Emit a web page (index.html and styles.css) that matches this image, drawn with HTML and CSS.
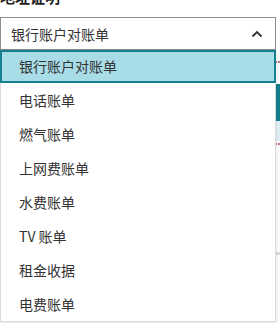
FILE: index.html
```html
<!DOCTYPE html>
<html lang="zh-CN">
<head>
  <meta charset="UTF-8">
  <title>地址证明</title>
  <link rel="stylesheet" href="styles.css">
</head>
<body>
  <div class="field">
    <label class="field-label">地址证明</label>

    <div class="select-wrap">
      <div class="select-box">
        <span class="select-value">银行账户对账单</span>
        <svg class="chevron" width="12" height="8" viewBox="0 0 12 8">
          <path d="M1.5 6.5 L6 2 L10.5 6.5" fill="none" stroke="#333" stroke-width="1.8"/>
        </svg>
      </div>

      <ul class="dropdown">
        <li class="option selected">银行账户对账单</li>
        <li class="option">电话账单</li>
        <li class="option">燃气账单</li>
        <li class="option">上网费账单</li>
        <li class="option">水费账单</li>
        <li class="option">TV 账单</li>
        <li class="option">租金收据</li>
        <li class="option">电费账单</li>
      </ul>
    </div>
  </div>

  <div class="under">
    <div class="hint-line"></div>
    <div class="upload-btn"></div>
    <div class="upload-note"></div>
    <div class="hint-line second"></div>
    <div class="divider"></div>
    <p class="section-title">请确认您的地址信息</p>
  </div>
</body>
</html>
```

FILE: styles.css
```css
body {
  margin: 0;
  font-family: "Noto Sans CJK SC", "Noto Sans", sans-serif;
  color: #333;
  background: #fff;
  overflow: hidden;
}

.field {
  margin-top: -13px;
}

.field-label {
  display: block;
  font-size: 15px;
  font-weight: bold;
  line-height: 20px;
  color: #222;
  margin-bottom: 10px;
}

.select-wrap {
  position: relative;
  width: 276px;
}

.select-box {
  box-sizing: border-box;
  height: 33px;
  border: 1px solid #8c8c8c;
  display: flex;
  align-items: center;
  justify-content: space-between;
  padding: 0 12px 0 10px;
  background: #fff;
}

.select-value {
  font-size: 14px;
  color: #333;
}

.chevron {
  display: block;
}

.dropdown {
  position: absolute;
  top: 33px;
  left: 0;
  z-index: 10;
  box-sizing: border-box;
  width: 276px;
  height: 272px;
  margin: 0;
  padding: 0;
  list-style: none;
  background: #fff;
  border: 1px solid #dcdcdc;
  border-top: none;
  box-shadow: 0 2px 6px rgba(0, 0, 0, 0.12);
}

.option {
  height: 34px;
  line-height: 34px;
  padding-left: 18px;
  font-size: 14px;
  color: #333;
}

.option.selected {
  box-sizing: border-box;
  height: 33px;
  line-height: 29px;
  margin: 0 -1px;
  padding-left: 17px;
  background: #a8dde8;
  border: 2px solid #17808f;
}

.under {
  padding-top: 11px;
}

.hint-line {
  height: 1px;
  border-top: 2px dotted #c9748a;
}

.upload-btn {
  margin-top: 20px;
  height: 37px;
  background: #127f8e;
}

.upload-note {
  height: 20px;
  background: #e4f3f8;
}

.hint-line.second {
  margin-top: 2px;
}

.divider {
  margin-top: 106px;
  height: 3px;
  background: #dedede;
}

.section-title {
  margin: 66px 0 0 8px;
  font-size: 15px;
  font-weight: bold;
  color: #111;
}
```
